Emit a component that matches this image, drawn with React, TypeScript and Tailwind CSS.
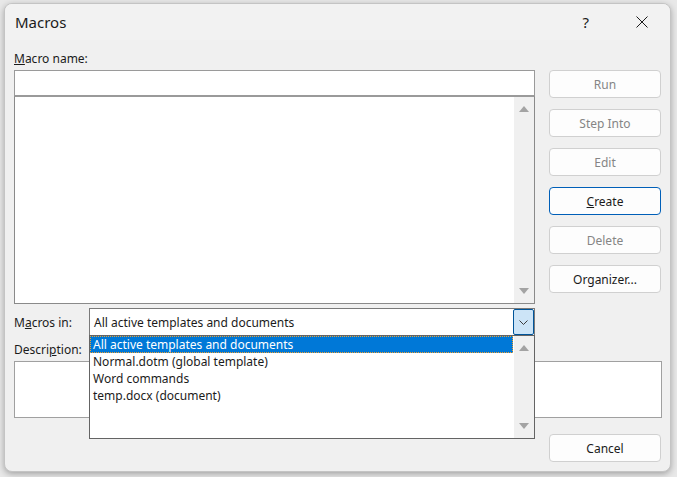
import { ReactNode } from 'react';

function UpArrow() {
  return (
    <svg width="10" height="6" viewBox="0 0 10 6">
      <polygon points="5,0 10,6 0,6" fill="#a3a3a3" />
    </svg>
  );
}

function DownArrow() {
  return (
    <svg width="10" height="6" viewBox="0 0 10 6">
      <polygon points="0,0 10,0 5,6" fill="#a3a3a3" />
    </svg>
  );
}

function ScrollBar({ width }: { width: string }) {
  return (
    <div className={`${width} h-full bg-[#f0f0f0] flex flex-col justify-between items-center py-[9px]`}>
      <UpArrow />
      <DownArrow />
    </div>
  );
}

function DialogButton({ children, disabled, focused }: { children: ReactNode; disabled?: boolean; focused?: boolean }) {
  return (
    <button
      className={`w-[112px] h-[28px] pt-[2px] rounded-[4px] bg-[#fdfdfd] text-[12px] border ${
        focused ? 'border-[#005fb8]' : 'border-[#d0d0d0]'
      } ${disabled ? 'text-[#858585]' : 'text-[#1b1b1b]'}`}
    >
      {children}
    </button>
  );
}

export default function App() {
  return (
    <div className="w-[677px] h-[477px] bg-[#e8e8e8] pt-[3px] pl-[4px] font-['Noto_Sans',sans-serif] text-[#1b1b1b]">
      <div className="w-[667px] h-[469px] rounded-[8px] border border-[#c4c4c4] bg-[#f0f0f0] shadow-[0_2px_6px_rgba(0,0,0,0.3)] overflow-hidden">
        {/* Title bar */}
        <div className="h-[36px] flex items-center pl-[10px] bg-[#f2f2f2]">
          <span className="text-[15px]">Macros</span>
          <span className="ml-auto text-[15px] mr-[47px]">?</span>
          <svg width="12" height="12" viewBox="0 0 12 12" className="mr-[22px]">
            <path d="M0.5 0.5 L11.5 11.5 M11.5 0.5 L0.5 11.5" stroke="#1b1b1b" strokeWidth="1" />
          </svg>
        </div>

        {/* Body */}
        <div className="pl-[9px] text-[12px]">
          <div className="flex mt-[10px]">
            {/* Left column */}
            <div className="w-[521px] flex flex-col">
              <div className="h-[16px] leading-[18px]">
                <u>M</u>acro name:
              </div>
              <div className="mt-[4px] h-[26px] bg-white border border-[#9a9a9a]" />
              <div className="h-[208px] bg-white border border-[#8a8a8a] border-t-[#9a9a9a] flex justify-end">
                <ScrollBar width="w-[20px]" />
              </div>
            </div>

            {/* Right column */}
            <div className="ml-[14px] mt-[20px] flex flex-col gap-[11px]">
              <DialogButton disabled>Run</DialogButton>
              <DialogButton disabled>Step Into</DialogButton>
              <DialogButton disabled>Edit</DialogButton>
              <DialogButton focused>
                <u>C</u>reate
              </DialogButton>
              <DialogButton disabled>Delete</DialogButton>
              <DialogButton>
                Or<u>g</u>anizer...
              </DialogButton>
            </div>
          </div>

          {/* Macros in */}
          <div className="flex items-center mt-[4px] h-[28px]">
            <div className="w-[75px] pt-[2px]">
              M<u>a</u>cros in:
            </div>
            <div className="relative w-[446px] h-[28px] bg-white border border-[#7a7a7a] flex items-center">
              <span className="flex-1 pl-[4px] pt-[2px]">All active templates and documents</span>
              <div className="w-[21px] h-[26px] bg-[#cce4f7] border border-[#005499] rounded-[2px] flex items-center justify-center">
                <svg width="9" height="5" viewBox="0 0 9 5">
                  <polyline points="0.5,0.5 4.5,4.5 8.5,0.5" fill="none" stroke="#3b3b3b" strokeWidth="1" />
                </svg>
              </div>

              {/* Open dropdown list */}
              <div className="absolute left-[-1px] top-[26px] w-[446px] h-[104px] bg-white border border-[#646464] flex z-10">
                <div className="flex-1 flex flex-col mr-[1px]">
                  <div className="h-[17px] leading-[16px] pl-[2px] bg-[#0078d7] text-white border border-dotted border-[#f0a030]">
                    All active templates and documents
                  </div>
                  <div className="h-[17px] leading-[18px] pl-[3px]">Normal.dotm (global template)</div>
                  <div className="h-[17px] leading-[18px] pl-[3px]">Word commands</div>
                  <div className="h-[17px] leading-[18px] pl-[3px]">temp.docx (document)</div>
                </div>
                <ScrollBar width="w-[20px]" />
              </div>
            </div>
          </div>

          {/* Description */}
          <div className="mt-[6px] h-[16px] leading-[16px]">
            Descri<u>p</u>tion:
          </div>
          <div className="mt-[3px] w-[648px] h-[57px] bg-white border border-[#a0a0a0]" />

          <div className="mt-[16px] flex pl-[535px]">
            <DialogButton>Cancel</DialogButton>
          </div>
        </div>
      </div>
    </div>
  );
}
